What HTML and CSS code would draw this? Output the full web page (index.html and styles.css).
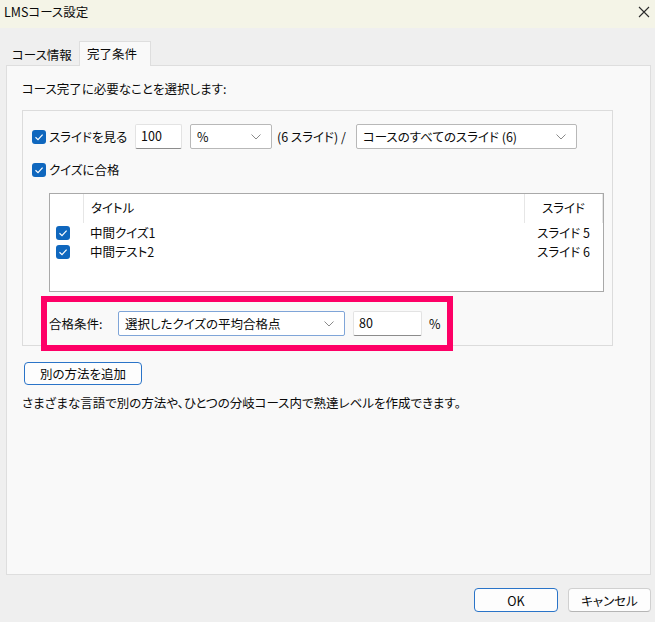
FILE: index.html
```html
<!DOCTYPE html>
<html lang="ja">
<head>
<meta charset="utf-8">
<title>LMSコース設定</title>
<link rel="stylesheet" href="styles.css">
</head>
<body>
<div class="window">
  <div class="titlebar">
    <span class="title">LMSコース設定</span>
    <svg class="close" width="12" height="12" viewBox="0 0 12 12"><path d="M1 1 L11 11 M11 1 L1 11" stroke="#2b2b2b" stroke-width="1.1" fill="none"/></svg>
  </div>
  <div class="tabs">
    <div class="tab">コース情報</div>
    <div class="tab active">完了条件</div>
  </div>
  <div class="panel">
    <p class="intro">コース完了に必要なことを選択します:</p>
    <div class="group">
      <div class="row1">
        <label class="check"><svg class="cb" width="14" height="14" viewBox="0 0 14 14"><rect x="0" y="0" width="14" height="14" rx="3" fill="#0f67be"/><path d="M3.5 7.3 L6 9.6 L10.6 4.6" stroke="#fff" stroke-width="1.2" fill="none"/></svg><span>スライドを見る</span></label>
        <div class="textbox tb-100">100</div>
        <div class="select sel-pct"><span>%</span><svg class="chev" width="10" height="6" viewBox="0 0 10 6"><path d="M0.5 0.5 L5 5 L9.5 0.5" stroke="#8a8a8a" stroke-width="1" fill="none"/></svg></div>
        <span class="note">(6 スライド) /</span>
        <div class="select sel-all"><span>コースのすべてのスライド (6)</span><svg class="chev" width="10" height="6" viewBox="0 0 10 6"><path d="M0.5 0.5 L5 5 L9.5 0.5" stroke="#8a8a8a" stroke-width="1" fill="none"/></svg></div>
      </div>
      <div class="row2">
        <label class="check"><svg class="cb" width="14" height="14" viewBox="0 0 14 14"><rect x="0" y="0" width="14" height="14" rx="3" fill="#0f67be"/><path d="M3.5 7.3 L6 9.6 L10.6 4.6" stroke="#fff" stroke-width="1.2" fill="none"/></svg><span>クイズに合格</span></label>
      </div>
      <div class="listview">
        <div class="lv-head">
          <div class="c0"></div>
          <div class="c1 hcell">タイトル</div>
          <div class="c2 hcell">スライド</div>
        </div>
        <div class="lv-row">
          <div class="c0"><svg class="cb" width="14" height="14" viewBox="0 0 14 14"><rect x="0" y="0" width="14" height="14" rx="3" fill="#0f67be"/><path d="M3.5 7.3 L6 9.6 L10.6 4.6" stroke="#fff" stroke-width="1.2" fill="none"/></svg></div>
          <div class="c1">中間クイズ1</div>
          <div class="c2">スライド 5</div>
        </div>
        <div class="lv-row">
          <div class="c0"><svg class="cb" width="14" height="14" viewBox="0 0 14 14"><rect x="0" y="0" width="14" height="14" rx="3" fill="#0f67be"/><path d="M3.5 7.3 L6 9.6 L10.6 4.6" stroke="#fff" stroke-width="1.2" fill="none"/></svg></div>
          <div class="c1">中間テスト2</div>
          <div class="c2">スライド 6</div>
        </div>
      </div>
      <div class="cond">
        <span class="cond-label">合格条件:</span>
        <div class="select sel-cond"><span>選択したクイズの平均合格点</span><svg class="chev" width="10" height="6" viewBox="0 0 10 6"><path d="M0.5 0.5 L5 5 L9.5 0.5" stroke="#8a8a8a" stroke-width="1" fill="none"/></svg></div>
        <div class="textbox tb-80">80</div>
        <span class="pct">%</span>
      </div>
    </div>
    <button class="btn btn-add">別の方法を追加</button>
    <p class="desc">さまざまな言語で別の方法や、ひとつの分岐コース内で熟達レベルを作成できます。</p>
  </div>
  <div class="footer">
    <button class="btn btn-default btn-ok">OK</button>
    <button class="btn btn-cancel">キャンセル</button>
  </div>
</div>
</body>
</html>
```

FILE: styles.css
```css
* { box-sizing: border-box; }
html, body { margin: 0; padding: 0; }
body {
  background: #efefef;
  font-family: "Noto Sans CJK JP", "Noto Sans", sans-serif;
  font-size: 12.5px;
  color: #0a0a0a;
  font-feature-settings: "palt";
}
.window { width: 655px; height: 622px; }
.titlebar {
  height: 28px;
  background: #f4f4e7;
  display: flex;
  align-items: center;
  justify-content: space-between;
  padding: 0 5px 4px 4px;
}
.title { font-size: 12.5px; line-height: 16px; }
.close { display: block; }
.tabs {
  margin-top: 13px;
  height: 24px;
  padding-left: 8px;
  display: flex;
  align-items: flex-end;
}
.tab {
  height: 20px;
  line-height: 20px;
  padding: 0 0 0 4px;
  width: 71px;
  white-space: nowrap;
}
.tab.active {
  width: 72px;
  height: 25px;
  line-height: 24px;
  padding-left: 7px;
  margin-bottom: -1px;
  background: #f9f9f9;
  border: 1px solid #dedede;
  border-bottom: none;
  position: relative;
  z-index: 1;
}
.panel {
  margin-left: 6px;
  width: 645px;
  height: 510px;
  background: #f9f9f9;
  border: 1px solid #dedede;
  padding: 14px 0 0 15px;
}
.intro { margin: 0; line-height: 18px; }
.group {
  margin-top: 12px;
  width: 591px;
  height: 236px;
  border: 1px solid #dcdcdc;
  padding: 13px 0 0 9px;
}
.row1 { display: flex; align-items: center; height: 25px; }
.check { display: flex; align-items: center; gap: 3px; line-height: 18px; white-space: nowrap; }
.cb { display: block; flex: none; }
.row1 .check { width: 103px; }
.textbox {
  height: 25px;
  background: #fff;
  border: 1px solid #e3e3e3;
  border-bottom-color: #8c8c8c;
  border-radius: 2px;
  padding: 0 5px;
  line-height: 22px;
}
.tb-100 { width: 47px; }
.select {
  height: 25px;
  background: #fff;
  border: 1px solid #b8b8b8;
  border-radius: 2px;
  display: flex;
  align-items: center;
  justify-content: space-between;
  padding: 0 10px 0 6px;
  white-space: nowrap;
}
.sel-pct { width: 82px; margin-left: 8px; }
.note { margin-left: 5px; white-space: nowrap; }
.sel-all { width: 221px; margin-left: 10px; }
.row2 { margin-top: 12px; height: 18px; display: flex; align-items: center; }
.listview {
  margin: 14px 0 0 17px;
  width: 555px;
  height: 99px;
  background: #fff;
  border: 1px solid #a9a9a9;
}
.lv-head, .lv-row { display: flex; align-items: center; }
.lv-head { height: 29px; }
.lv-row { height: 19px; }
.c0 { width: 33px; padding-left: 6px; }
.c1 { width: 441px; padding-left: 7px; }
.c2 { width: 79px; text-align: center; }
.hcell { height: 29px; line-height: 28px; border-left: 1px solid #e6e6e6; }
.c2.hcell { border-right: 1px solid #e6e6e6; }
.cond {
  margin: 10px 0 0 15px;
  width: 400px;
  height: 43px;
  display: flex;
  align-items: center;
  padding-left: 2px;
  outline: 6px solid #fe0066;
}
.cond-label { width: 69px; }
.sel-cond { width: 227px; border-color: #7fa5d8; }
.tb-80 { width: 69px; margin-left: 8px; }
.pct { margin-left: 7px; }
.btn {
  font-family: inherit;
  font-size: 12.5px;
  color: #0a0a0a;
  background: #fdfdfd;
  border: 1px solid #d0d0d0;
  border-bottom-color: #b5b5b5;
  border-radius: 4px;
  padding: 0;
  display: block;
  font-feature-settings: "palt";
}
.btn-add {
  margin: 16px 0 0 2px;
  width: 118px;
  height: 23px;
  border: 1px solid #2a74c8;
}
.desc { margin: 9px 0 0; line-height: 18px; }
.footer {
  margin-top: 13px;
  display: flex;
  justify-content: flex-end;
  gap: 10px;
  padding-right: 4px;
}
.btn-ok { width: 84px; height: 24px; border: 1px solid #2a74c8; }
.btn-cancel { width: 83px; height: 24px; }
```
